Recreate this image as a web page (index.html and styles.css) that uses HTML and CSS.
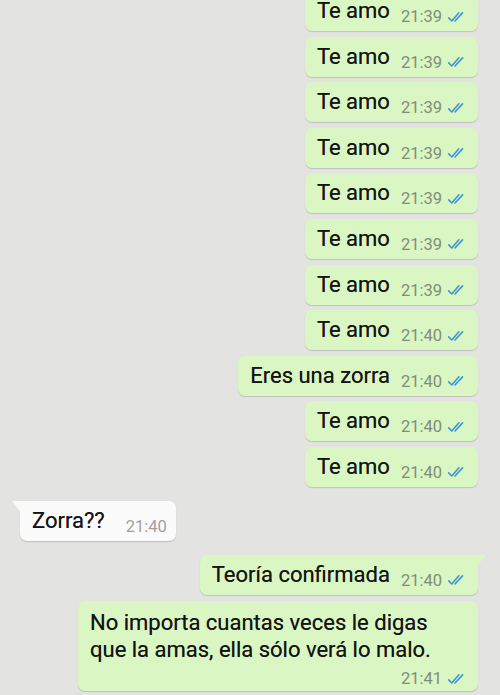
FILE: index.html
```html
<!DOCTYPE html>
<html lang="es">
<head>
<meta charset="utf-8">
<title>Chat</title>
<link rel="stylesheet" href="styles.css">
</head>
<body>
<main class="chat">
  <div class="group sent">
    <div class="bubble tail"><span class="text">Te amo</span><span class="meta"><span class="time">21:39</span><svg class="ticks" viewBox="0 0 22 13"><path d="M1.5 7.5 L4.8 10.8 L12.5 2"/><path d="M8.3 10.8 L16.5 2"/></svg></span></div>
    <div class="bubble"><span class="text">Te amo</span><span class="meta"><span class="time">21:39</span><svg class="ticks" viewBox="0 0 22 13"><path d="M1.5 7.5 L4.8 10.8 L12.5 2"/><path d="M8.3 10.8 L16.5 2"/></svg></span></div>
    <div class="bubble"><span class="text">Te amo</span><span class="meta"><span class="time">21:39</span><svg class="ticks" viewBox="0 0 22 13"><path d="M1.5 7.5 L4.8 10.8 L12.5 2"/><path d="M8.3 10.8 L16.5 2"/></svg></span></div>
    <div class="bubble"><span class="text">Te amo</span><span class="meta"><span class="time">21:39</span><svg class="ticks" viewBox="0 0 22 13"><path d="M1.5 7.5 L4.8 10.8 L12.5 2"/><path d="M8.3 10.8 L16.5 2"/></svg></span></div>
    <div class="bubble"><span class="text">Te amo</span><span class="meta"><span class="time">21:39</span><svg class="ticks" viewBox="0 0 22 13"><path d="M1.5 7.5 L4.8 10.8 L12.5 2"/><path d="M8.3 10.8 L16.5 2"/></svg></span></div>
    <div class="bubble"><span class="text">Te amo</span><span class="meta"><span class="time">21:39</span><svg class="ticks" viewBox="0 0 22 13"><path d="M1.5 7.5 L4.8 10.8 L12.5 2"/><path d="M8.3 10.8 L16.5 2"/></svg></span></div>
    <div class="bubble"><span class="text">Te amo</span><span class="meta"><span class="time">21:39</span><svg class="ticks" viewBox="0 0 22 13"><path d="M1.5 7.5 L4.8 10.8 L12.5 2"/><path d="M8.3 10.8 L16.5 2"/></svg></span></div>
    <div class="bubble"><span class="text">Te amo</span><span class="meta"><span class="time">21:40</span><svg class="ticks" viewBox="0 0 22 13"><path d="M1.5 7.5 L4.8 10.8 L12.5 2"/><path d="M8.3 10.8 L16.5 2"/></svg></span></div>
    <div class="bubble"><span class="text">Eres una zorra</span><span class="meta"><span class="time">21:40</span><svg class="ticks" viewBox="0 0 22 13"><path d="M1.5 7.5 L4.8 10.8 L12.5 2"/><path d="M8.3 10.8 L16.5 2"/></svg></span></div>
    <div class="bubble"><span class="text">Te amo</span><span class="meta"><span class="time">21:40</span><svg class="ticks" viewBox="0 0 22 13"><path d="M1.5 7.5 L4.8 10.8 L12.5 2"/><path d="M8.3 10.8 L16.5 2"/></svg></span></div>
    <div class="bubble"><span class="text">Te amo</span><span class="meta"><span class="time">21:40</span><svg class="ticks" viewBox="0 0 22 13"><path d="M1.5 7.5 L4.8 10.8 L12.5 2"/><path d="M8.3 10.8 L16.5 2"/></svg></span></div>
  </div>

  <div class="group received">
    <div class="bubble tail"><span class="text">Zorra??</span><span class="meta"><span class="time">21:40</span></span></div>
  </div>

  <div class="group sent">
    <div class="bubble tail"><span class="text">Teoría confirmada</span><span class="meta"><span class="time">21:40</span><svg class="ticks" viewBox="0 0 22 13"><path d="M1.5 7.5 L4.8 10.8 L12.5 2"/><path d="M8.3 10.8 L16.5 2"/></svg></span></div>
    <div class="bubble multi"><span class="text">No importa cuantas veces le digas<br>que la amas, ella sólo verá lo malo.</span><span class="meta"><span class="time">21:41</span><svg class="ticks" viewBox="0 0 22 13"><path d="M1.5 7.5 L4.8 10.8 L12.5 2"/><path d="M8.3 10.8 L16.5 2"/></svg></span></div>
  </div>
</main>
</body>
</html>
```

FILE: styles.css
```css
* {
  box-sizing: border-box;
}

html, body {
  margin: 0;
  padding: 0;
  height: 100%;
  overflow: hidden;
}

body {
  background: #e3e3e1;
  font-family: Roboto, "Liberation Sans", Arial, sans-serif;
  color: #141414;
}

.chat {
  display: flex;
  flex-direction: column;
  gap: 14px;
  margin-top: -9px;
  padding: 0 22px 0 20px;
}

.group {
  display: flex;
  flex-direction: column;
  gap: 5.6px;
}

.group.sent {
  align-items: flex-end;
}

.group.received {
  align-items: flex-start;
}

.bubble {
  position: relative;
  display: flex;
  align-items: flex-end;
  height: 40px;
  padding: 7px 10px 7px 12px;
  border-radius: 7px;
  box-shadow: 0 1px 1px rgba(0, 0, 0, 0.16);
}

.sent .bubble {
  background: #daf6c3;
}

.received .bubble {
  background: #fbfbfb;
}

.text {
  font-size: 22px;
  line-height: 26px;
  white-space: nowrap;
  text-shadow: 0 0 0.4px rgba(0, 0, 0, 0.6);
}

.meta {
  display: flex;
  align-items: center;
  gap: 5px;
  margin-left: 11px;
  margin-bottom: 1px;
  line-height: 13px;
}

.time {
  font-size: 16.5px;
  line-height: 13px;
  color: #7f8e78;
}

.received .meta {
  margin-left: 21px;
  margin-right: -1px;
}

.received .time {
  color: #a0a0a0;
}

.ticks {
  width: 21px;
  height: 12px;
  fill: none;
  stroke: #3f95d0;
  stroke-width: 1.7;
  stroke-linecap: round;
  stroke-linejoin: round;
}

/* tails */
.sent .bubble.tail {
  border-top-right-radius: 0;
}

.sent .bubble.tail::after {
  content: "";
  position: absolute;
  top: 0;
  right: -8px;
  border-top: 10px solid #daf6c3;
  border-right: 8px solid transparent;
}

.received .bubble.tail {
  border-top-left-radius: 0;
}

.received .bubble.tail::before {
  content: "";
  position: absolute;
  top: 0;
  left: -8px;
  border-top: 10px solid #fbfbfb;
  border-left: 8px solid transparent;
}

/* multi-line bubble */
.bubble.multi {
  display: block;
  height: 90px;
  width: 400px;
  padding: 8px 10px 5px 12px;
}

.bubble.multi .text {
  display: block;
  line-height: 27px;
}

.bubble.multi .meta {
  justify-content: flex-end;
  margin: 6px 0 0;
  line-height: 20px;
}

.bubble.multi .time {
  line-height: 20px;
}
```
